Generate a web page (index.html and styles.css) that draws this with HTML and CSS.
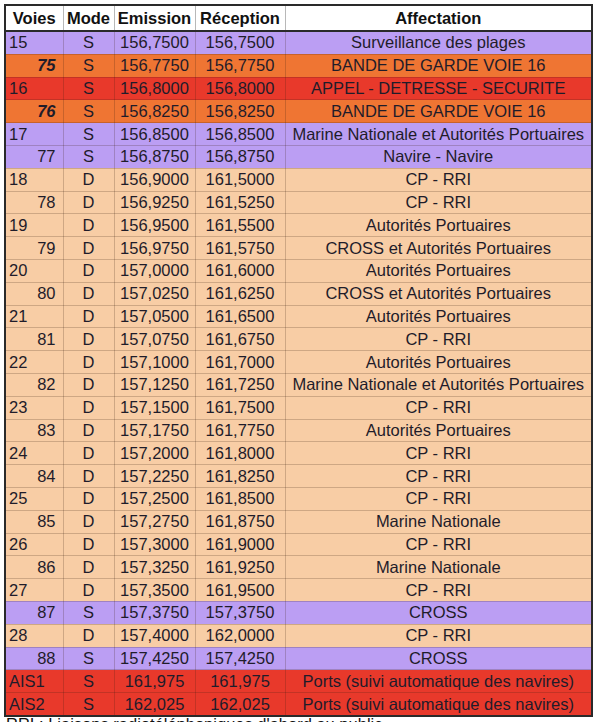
FILE: index.html
```html
<!DOCTYPE html>
<html lang="fr">
<head>
<meta charset="utf-8">
<title>Voies VHF marine</title>
<link rel="stylesheet" href="styles.css">
</head>
<body>
<div class="page">
<table class="vhf">
  <colgroup>
    <col class="c-voie"><col class="c-mode"><col class="c-em"><col class="c-rec"><col class="c-aff">
  </colgroup>
  <thead>
    <tr><th>Voies</th><th>Mode</th><th>Emission</th><th>Réception</th><th>Affectation</th></tr>
  </thead>
  <tbody>
    <tr class="lav"><td class="v">15</td><td>S</td><td>156,7500</td><td>156,7500</td><td>Surveillance des plages</td></tr>
    <tr class="org"><td class="v v7 strong">75</td><td>S</td><td>156,7750</td><td>156,7750</td><td>BANDE DE GARDE VOIE 16</td></tr>
    <tr class="red"><td class="v">16</td><td>S</td><td>156,8000</td><td>156,8000</td><td>APPEL - DETRESSE - SECURITE</td></tr>
    <tr class="org"><td class="v v7 strong">76</td><td>S</td><td>156,8250</td><td>156,8250</td><td>BANDE DE GARDE VOIE 16</td></tr>
    <tr class="lav"><td class="v">17</td><td>S</td><td>156,8500</td><td>156,8500</td><td>Marine Nationale et Autorités Portuaires</td></tr>
    <tr class="lav"><td class="v v7">77</td><td>S</td><td>156,8750</td><td>156,8750</td><td>Navire - Navire</td></tr>
    <tr class="pch"><td class="v">18</td><td>D</td><td>156,9000</td><td>161,5000</td><td>CP - RRI</td></tr>
    <tr class="pch"><td class="v v7">78</td><td>D</td><td>156,9250</td><td>161,5250</td><td>CP - RRI</td></tr>
    <tr class="pch"><td class="v">19</td><td>D</td><td>156,9500</td><td>161,5500</td><td>Autorités Portuaires</td></tr>
    <tr class="pch"><td class="v v7">79</td><td>D</td><td>156,9750</td><td>161,5750</td><td>CROSS et Autorités Portuaires</td></tr>
    <tr class="pch"><td class="v">20</td><td>D</td><td>157,0000</td><td>161,6000</td><td>Autorités Portuaires</td></tr>
    <tr class="pch"><td class="v v7">80</td><td>D</td><td>157,0250</td><td>161,6250</td><td>CROSS et Autorités Portuaires</td></tr>
    <tr class="pch"><td class="v">21</td><td>D</td><td>157,0500</td><td>161,6500</td><td>Autorités Portuaires</td></tr>
    <tr class="pch"><td class="v v7">81</td><td>D</td><td>157,0750</td><td>161,6750</td><td>CP - RRI</td></tr>
    <tr class="pch"><td class="v">22</td><td>D</td><td>157,1000</td><td>161,7000</td><td>Autorités Portuaires</td></tr>
    <tr class="pch"><td class="v v7">82</td><td>D</td><td>157,1250</td><td>161,7250</td><td>Marine Nationale et Autorités Portuaires</td></tr>
    <tr class="pch"><td class="v">23</td><td>D</td><td>157,1500</td><td>161,7500</td><td>CP - RRI</td></tr>
    <tr class="pch"><td class="v v7">83</td><td>D</td><td>157,1750</td><td>161,7750</td><td>Autorités Portuaires</td></tr>
    <tr class="pch"><td class="v">24</td><td>D</td><td>157,2000</td><td>161,8000</td><td>CP - RRI</td></tr>
    <tr class="pch"><td class="v v7">84</td><td>D</td><td>157,2250</td><td>161,8250</td><td>CP - RRI</td></tr>
    <tr class="pch"><td class="v">25</td><td>D</td><td>157,2500</td><td>161,8500</td><td>CP - RRI</td></tr>
    <tr class="pch"><td class="v v7">85</td><td>D</td><td>157,2750</td><td>161,8750</td><td>Marine Nationale</td></tr>
    <tr class="pch"><td class="v">26</td><td>D</td><td>157,3000</td><td>161,9000</td><td>CP - RRI</td></tr>
    <tr class="pch"><td class="v v7">86</td><td>D</td><td>157,3250</td><td>161,9250</td><td>Marine Nationale</td></tr>
    <tr class="pch"><td class="v">27</td><td>D</td><td>157,3500</td><td>161,9500</td><td>CP - RRI</td></tr>
    <tr class="lav"><td class="v v7">87</td><td>S</td><td>157,3750</td><td>157,3750</td><td>CROSS</td></tr>
    <tr class="pch"><td class="v">28</td><td>D</td><td>157,4000</td><td>162,0000</td><td>CP - RRI</td></tr>
    <tr class="lav"><td class="v v7">88</td><td>S</td><td>157,4250</td><td>157,4250</td><td>CROSS</td></tr>
    <tr class="red"><td class="v">AIS1</td><td>S</td><td>161,975</td><td>161,975</td><td>Ports (suivi automatique des navires)</td></tr>
    <tr class="red"><td class="v">AIS2</td><td>S</td><td>162,025</td><td>162,025</td><td>Ports (suivi automatique des navires)</td></tr>
  </tbody>
</table>
<p class="note">RRI : Liaisons radiotéléphoniques d'abord au public</p>
</div>
</body>
</html>
```
FILE: styles.css
```css
html, body {
  margin: 0;
  padding: 0;
  background: #ffffff;
}
.page {
  padding: 4px 0 0 4px;
  font-family: "Liberation Sans", Arial, sans-serif;
  color: #1f1c2a;
}
.vhf {
  border-collapse: collapse;
  width: 589px;
  table-layout: fixed;
  font-size: 16.5px;
  border: 2px solid #2a2a2a;
}
.c-voie { width: 58px; }
.c-mode { width: 51px; }
.c-em { width: 81px; }
.c-rec { width: 90px; }
.c-aff { width: auto; }
.vhf th {
  background: #ffffff;
  font-weight: bold;
  height: 24px;
  line-height: 18px;
  padding: 0;
  text-align: center;
  color: #111;
  border: 1px solid #b8b8b8;
  border-bottom: 2px solid #2a2a2a;
  border-top: 2px solid #2a2a2a;
  white-space: nowrap;
}
.vhf td {
  height: 21.8px;
  padding: 0;
  text-align: center;
  white-space: nowrap;
  border: 1px solid rgba(60, 30, 20, 0.22);
  line-height: 17px;
}
.vhf td.v {
  text-align: left;
  padding-left: 3px;
}
.vhf td.v7 {
  text-align: right;
  padding-right: 7px;
  padding-left: 0;
}
.vhf td.strong {
  font-weight: bold;
  font-style: italic;
}
.lav td { background: #bb9ef3; }
.org td { background: #ef7533; }
.red td { background: #e8392b; }
.pch td { background: #f8cda5; }
.note {
  margin: 0 0 0 2px;
  font-size: 16.5px;
  line-height: 15px;
  color: #111;
}
```
